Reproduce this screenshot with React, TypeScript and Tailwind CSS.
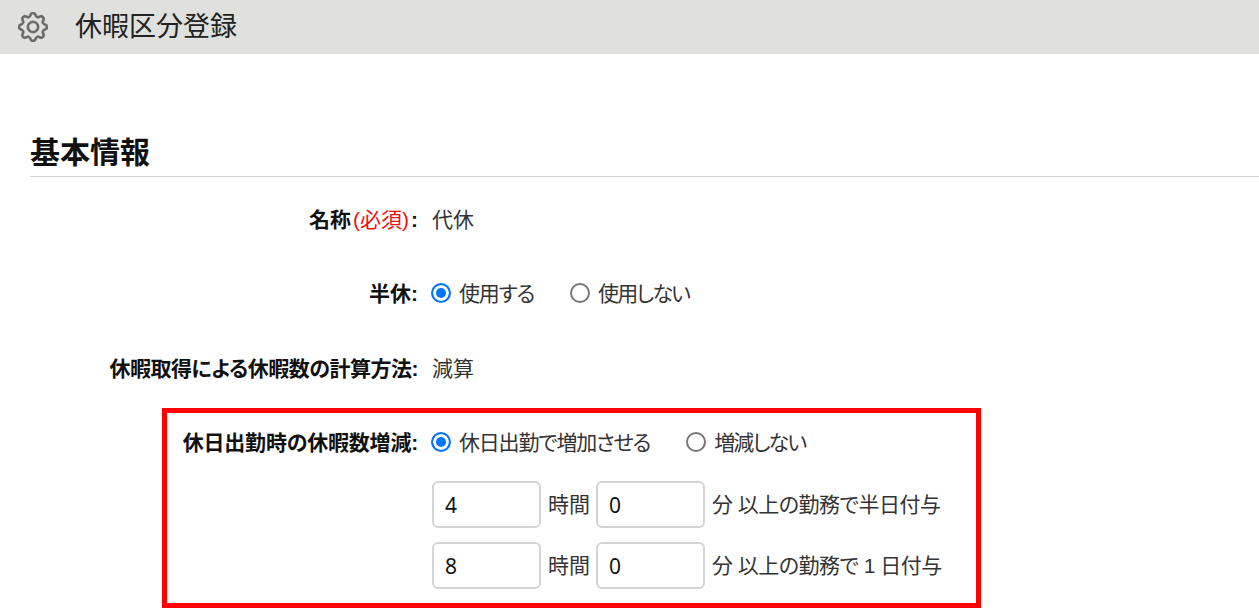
import { BsGear } from "react-icons/bs";

const font = "font-['Liberation_Sans','Noto_Sans_CJK_JP',sans-serif]";

function Radio({ name, label, checked }: { name: string; label: string; checked?: boolean }) {
  return (
    <label className="flex items-center gap-[8px]">
      <input
        type="radio"
        name={name}
        defaultChecked={checked}
        className="m-0 -ml-px -mt-[2px] h-[20px] w-[20px] appearance-none rounded-full border-2 border-[#767676] bg-white checked:border-[#0075ff] checked:bg-[#0075ff] checked:shadow-[inset_0_0_0_3px_white]"
      />
      <span className={checked ? "tracking-[-1.2px]" : "tracking-[-1.8px]"}>{label}</span>
    </label>
  );
}

function TimeRow({ hours, minutes, suffix }: { hours: string; minutes: string; suffix: string }) {
  return (
    <div className="flex items-center">
      <input
        defaultValue={hours}
        className="h-[47px] w-[109px] rounded-[6px] border-2 border-[#d4d4d4] px-[11px] text-[21px] text-[#111] font-['Noto_Sans',sans-serif]"
      />
      <span className="ml-[7px] mr-[6px]">時間</span>
      <input
        defaultValue={minutes}
        className="h-[47px] w-[109px] rounded-[6px] border-2 border-[#d4d4d4] px-[11px] text-[21px] text-[#111] font-['Noto_Sans',sans-serif]"
      />
      <span className="ml-[7px] tracking-[-0.5px]">{suffix}</span>
    </div>
  );
}

export default function App() {
  return (
    <div className={`h-[612px] w-[1259px] overflow-hidden bg-white text-[21px] leading-[30px] text-[#333] [font-feature-settings:'palt'] ${font}`}>
      <header className="flex h-[54px] items-center bg-[#e0e0de] pl-[18px]">
        <BsGear className="h-[30px] w-[30px] text-[#666]" stroke="currentColor" strokeWidth={0.4} />
        <h1 className="ml-[27px] text-[27px] font-normal text-[#222] [font-feature-settings:normal]">休暇区分登録</h1>
      </header>

      <section className="pl-[30px] pt-[79px]">
        <h2 className="h-[44px] border-b border-[#d0d0d0] text-[30px] font-bold leading-[40px] text-[#111] [font-feature-settings:normal]">基本情報</h2>
      </section>

      <div className="mt-[28px] flex flex-col gap-[44px]">
        <div className="flex">
          <div className="w-[418px] text-right font-bold text-[#111]">
            名称<span className="mx-[2px] font-normal text-[#ee1111]">(必須)</span>:
          </div>
          <div className="ml-[14px]">代休</div>
        </div>
        <div className="flex">
          <div className="w-[418px] text-right font-bold text-[#111]">半休:</div>
          <div className="ml-[14px] flex gap-[37px]">
            <Radio name="half" label="使用する" checked />
            <Radio name="half" label="使用しない" />
          </div>
        </div>
        <div className="mt-[1px] flex">
          <div className="w-[418px] text-right font-bold tracking-[-0.5px] text-[#111]">休暇取得による休暇数の計算方法:</div>
          <div className="ml-[14px]">減算</div>
        </div>
      </div>

      <div className="ml-[162px] mt-[24px] h-[200px] w-[819px] border-[5px] border-[#ff0000] pt-[15px]">
        <div className="flex">
          <div className="w-[251px] text-right font-bold tracking-[-0.2px] text-[#111]">休日出勤時の休暇数増減:</div>
          <div className="ml-[14px] flex flex-col">
            <div className="flex gap-[37px]">
              <Radio name="holiday" label="休日出勤で増加させる" checked />
              <Radio name="holiday" label="増減しない" />
            </div>
            <div className="mt-[23px] flex flex-col gap-[14px]">
              <TimeRow hours="4" minutes="0" suffix="分 以上の勤務で半日付与" />
              <TimeRow hours="8" minutes="0" suffix="分 以上の勤務で 1 日付与" />
            </div>
          </div>
        </div>
      </div>
    </div>
  );
}
